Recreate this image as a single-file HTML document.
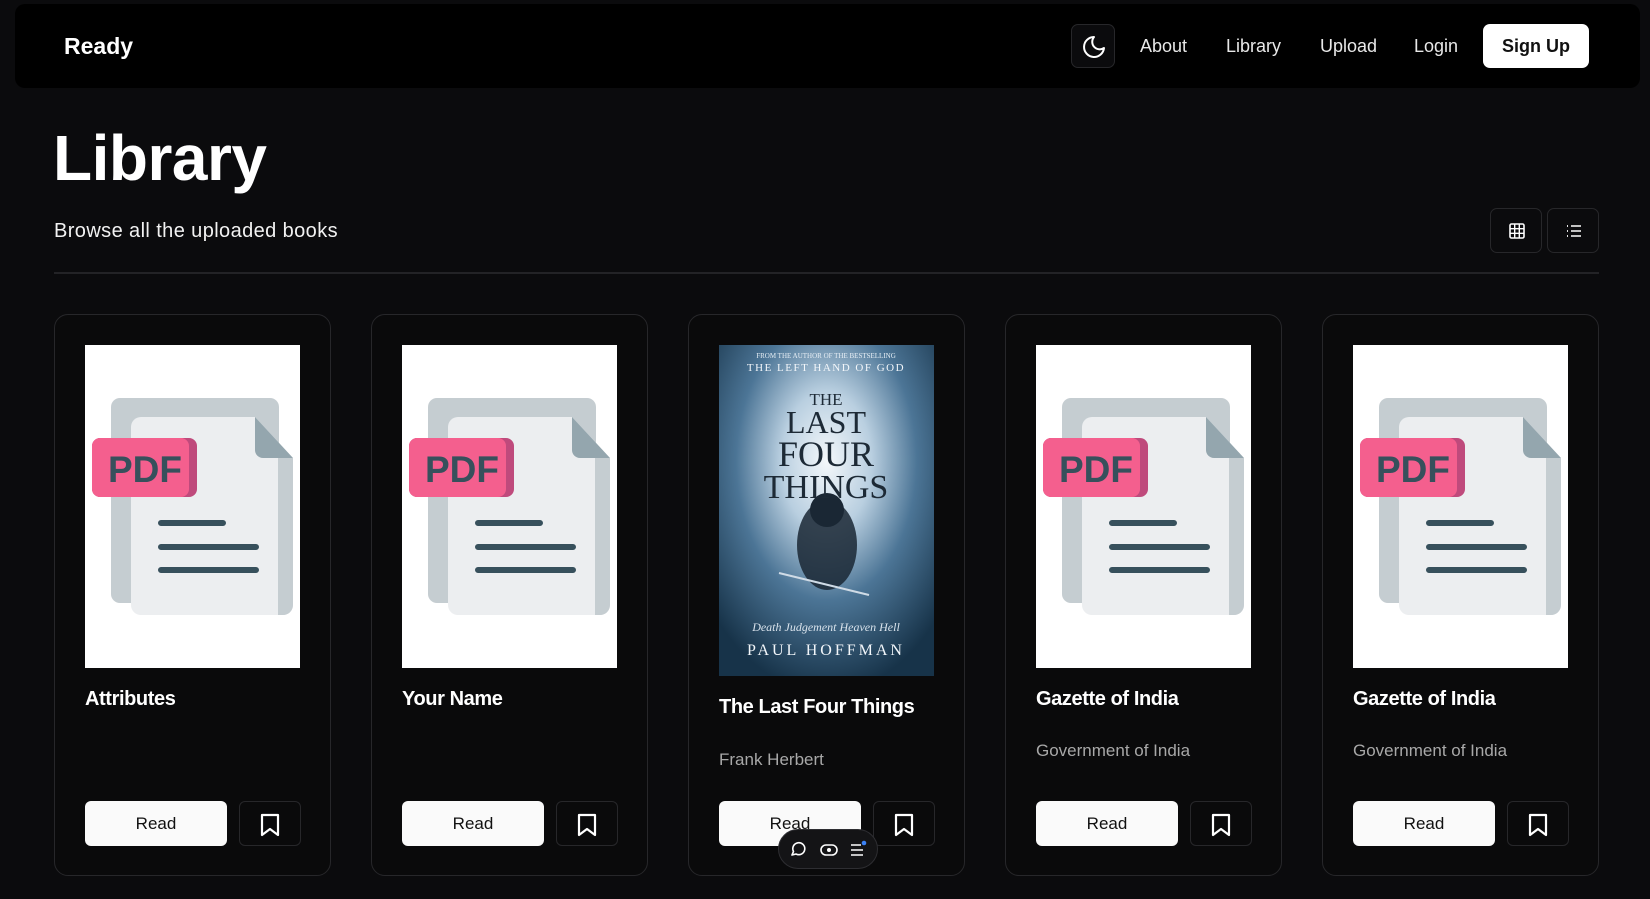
<!DOCTYPE html>
<html><head><meta charset="utf-8">
<style>
*{margin:0;padding:0;box-sizing:border-box}
body{width:1650px;height:899px;background:#0b0b0d;font-family:"Liberation Sans",sans-serif;color:#fff;position:relative;overflow:hidden}
.nav{position:absolute;left:15px;top:4px;width:1625px;height:84px;background:#000;border-radius:10px}
.abs{position:absolute}
.logo{left:64px;top:33px;font-size:23px;font-weight:bold;letter-spacing:0px}
.nl{top:36px;font-size:18px;color:#e8e8e8}
.moon{left:1071px;top:24px;width:44px;height:44px;border:1px solid #27272a;border-radius:7px;background:#0b0b0d}
.signup{left:1483px;top:24px;width:106px;height:44px;background:#fff;border-radius:7px;color:#111;font-weight:bold;font-size:18px;text-align:center;line-height:44px}
h1{position:absolute;left:53px;top:121px;font-size:64px;font-weight:bold;letter-spacing:-0.5px}
.sub{left:54px;top:220px;font-size:20px;color:#f2f2f2;letter-spacing:0.4px}
.vb{top:208px;width:52px;height:45px;border:1px solid #27272a;border-radius:7px}
.hr{left:54px;top:272px;width:1545px;height:2px;background:#232326}
.card{position:absolute;top:314px;width:277px;height:562px;border:1px solid #27272a;border-radius:14px;background:#0a0a0b}
.img{position:absolute;left:30px;top:30px;width:215px;height:323px;background:#fff}
.title{position:absolute;left:30px;top:373px;font-size:20px;font-weight:bold;letter-spacing:-0.4px}
.auth{position:absolute;left:30px;top:426px;font-size:17px;color:#a8a8a8}
.read{position:absolute;left:30px;top:486px;width:142px;height:45px;background:#fafafa;border-radius:6px;color:#111;font-size:17px;text-align:center;line-height:45px}
.bm{position:absolute;left:184px;top:486px;width:62px;height:45px;border:1px solid #27272a;border-radius:6px}
.bm svg{position:absolute;left:19px;top:11px}
</style></head><body>
<div class="nav"></div>
<div class="abs logo">Ready</div>
<div class="abs moon"><svg width="44" height="44" viewBox="0 0 44 44"><path d="M22 12a10 10 0 1 0 10 11 7.5 7.5 0 0 1-10-11z" fill="none" stroke="#fff" stroke-width="2" stroke-linejoin="round"/></svg></div>
<div class="abs nl" style="left:1140px">About</div>
<div class="abs nl" style="left:1226px">Library</div>
<div class="abs nl" style="left:1320px">Upload</div>
<div class="abs nl" style="left:1414px">Login</div>
<div class="abs signup">Sign Up</div>
<h1>Library</h1>
<div class="abs sub">Browse all the uploaded books</div>
<div class="abs vb" style="left:1490px"><svg width="52" height="45" viewBox="0 0 52 45"><rect x="19" y="15" width="14" height="14" rx="1.5" fill="none" stroke="#fff" stroke-width="1.6"/><path d="M19 19.7h14M19 24.3h14M23.7 15v14M28.3 15v14" stroke="#fff" stroke-width="1.4"/></svg></div>
<div class="abs vb" style="left:1547px"><svg width="52" height="45" viewBox="0 0 52 45"><path d="M23 17h10M23 22h10M23 27h10" stroke="#fff" stroke-width="1.6"/><path d="M19 17h1M19 22h1M19 27h1" stroke="#fff" stroke-width="1.8"/></svg></div>
<div class="abs hr"></div>

<svg width="0" height="0" style="position:absolute"><defs>
<symbol id="pdf" viewBox="0 0 215 323">
<rect width="215" height="323" fill="#fff"/>
<rect x="26" y="53" width="168" height="205" rx="9" fill="#c5cdd1"/>
<path d="M56 72h114l38 41v147a10 10 0 0 1-10 10H56a10 10 0 0 1-10-10V82a10 10 0 0 1 10-10z" fill="#eceef0"/>
<path d="M193 113h15v147a10 10 0 0 1-10 10h-5z" fill="#c5cdd1"/>
<path d="M170 72l38 41h-30a8 8 0 0 1-8-8z" fill="#94a6ae"/>
<rect x="7" y="93" width="105" height="59" rx="8" fill="#bf4a7c"/>
<rect x="7" y="93" width="97" height="59" rx="8" fill="#f45f8e"/>
<text x="23" y="137" font-family="Liberation Sans,sans-serif" font-weight="bold" font-size="37" fill="#37505c" textLength="74" lengthAdjust="spacingAndGlyphs">PDF</text>
<path d="M76 178h62M76 202h95M76 225h95" stroke="#37505c" stroke-width="6" stroke-linecap="round"/>
</symbol>
<symbol id="bmk" viewBox="0 0 22 24"><path d="M3 2h16v20l-8-6-8 6z" fill="none" stroke="#fff" stroke-width="2.2" stroke-linejoin="round"/></symbol>
<radialGradient id="cg" cx="50%" cy="35%" r="70%"><stop offset="0" stop-color="#f4f8fb"/><stop offset=".3" stop-color="#b9cfe0"/><stop offset=".6" stop-color="#4c7596"/><stop offset="1" stop-color="#173349"/></radialGradient>
</defs></svg>

<div class="card" style="left:54px"><div class="img"><svg width="215" height="323"><use href="#pdf"/></svg></div><div class="title">Attributes</div><div class="read">Read</div><div class="bm"><svg width="22" height="24"><use href="#bmk"/></svg></div></div>
<div class="card" style="left:371px"><div class="img"><svg width="215" height="323"><use href="#pdf"/></svg></div><div class="title">Your Name</div><div class="read">Read</div><div class="bm"><svg width="22" height="24"><use href="#bmk"/></svg></div></div>
<div class="card" style="left:688px"><div class="img" style="height:331px;background:#1d3a52"><svg width="215" height="331" viewBox="0 0 215 331"><rect width="215" height="331" fill="url(#cg)"/>
<ellipse cx="108" cy="200" rx="30" ry="45" fill="#1a2734" opacity=".85"/><circle cx="108" cy="165" r="17" fill="#1a2734"/>
<path d="M60 228l90 22" stroke="#cfdbe6" stroke-width="2"/>
<g font-family="Liberation Serif,serif" fill="#1d2a36" text-anchor="middle">
<text x="107" y="13" font-size="7" fill="#e6eef5">FROM THE AUTHOR OF THE BESTSELLING</text>
<text x="107" y="26" font-size="11" fill="#f2f6fa" letter-spacing="1.5">THE LEFT HAND OF GOD</text>
<text x="107" y="60" font-size="17">THE</text>
<text x="107" y="88" font-size="32">LAST</text>
<text x="107" y="121" font-size="36">FOUR</text>
<text x="107" y="153" font-size="34">THINGS</text>
<text x="107" y="286" font-size="12" font-style="italic" fill="#d9e3ec">Death  Judgement  Heaven  Hell</text>
<text x="107" y="310" font-size="16" fill="#f2f6fa" letter-spacing="3">PAUL HOFFMAN</text></g></svg></div>
<div class="title" style="top:381px">The Last Four Things</div><div class="auth" style="top:748px;top:435px">Frank Herbert</div><div class="read">Read</div><div class="bm"><svg width="22" height="24"><use href="#bmk"/></svg></div></div>
<div class="card" style="left:1005px"><div class="img"><svg width="215" height="323"><use href="#pdf"/></svg></div><div class="title">Gazette of India</div><div class="auth">Government of India</div><div class="read">Read</div><div class="bm"><svg width="22" height="24"><use href="#bmk"/></svg></div></div>
<div class="card" style="left:1322px"><div class="img"><svg width="215" height="323"><use href="#pdf"/></svg></div><div class="title">Gazette of India</div><div class="auth">Government of India</div><div class="read">Read</div><div class="bm"><svg width="22" height="24"><use href="#bmk"/></svg></div></div>

<div class="abs" style="left:778px;top:829px;width:100px;height:40px;background:#141416;border:1px solid #2e2e32;border-radius:20px">
<svg width="100" height="40" viewBox="0 0 100 40"><path d="M13 25l1.5-3.5A6 6 0 1 1 17 24z" fill="none" stroke="#fff" stroke-width="1.6" stroke-linejoin="round"/>
<rect x="42" y="15" width="16" height="10" rx="5" fill="none" stroke="#fff" stroke-width="1.6"/><circle cx="50" cy="20" r="2" fill="#fff"/>
<path d="M72 15h10M72 20h12M72 25h12" stroke="#fff" stroke-width="1.6"/><circle cx="85" cy="13" r="2.3" fill="#3b82f6"/></svg></div>
</body></html>
